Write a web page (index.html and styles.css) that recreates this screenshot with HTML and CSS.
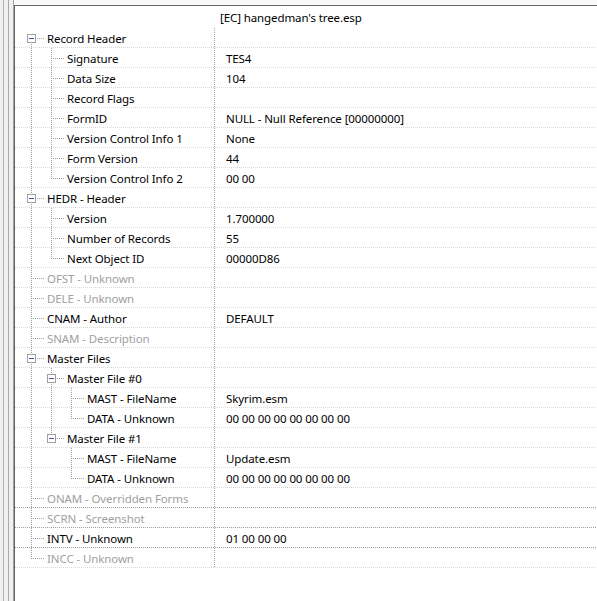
FILE: index.html
```html
<!DOCTYPE html>
<html>
<head>
<meta charset="utf-8">
<link rel="stylesheet" href="styles.css">
</head>
<body>
<div class="app">
  <div class="splitter"><span class="rail"></span><span class="rail"></span></div>
  <div class="view">
    <div class="topbar"></div>
    <div class="tree">
      <div class="head"><div class="head-name"></div><div class="head-value">[EC] hangedman's tree.esp</div></div>

      <div class="row"><div class="name"><span class="g first"><i class="box"></i></span><span class="label">Record Header</span></div><div class="value"></div></div>
      <div class="row"><div class="name"><span class="g pipe"></span><span class="g tee"></span><span class="label">Signature</span></div><div class="value">TES4</div></div>
      <div class="row"><div class="name"><span class="g pipe"></span><span class="g tee"></span><span class="label">Data Size</span></div><div class="value">104</div></div>
      <div class="row"><div class="name"><span class="g pipe"></span><span class="g tee"></span><span class="label">Record Flags</span></div><div class="value"></div></div>
      <div class="row"><div class="name"><span class="g pipe"></span><span class="g tee"></span><span class="label">FormID</span></div><div class="value">NULL - Null Reference [00000000]</div></div>
      <div class="row"><div class="name"><span class="g pipe"></span><span class="g tee"></span><span class="label">Version Control Info 1</span></div><div class="value">None</div></div>
      <div class="row"><div class="name"><span class="g pipe"></span><span class="g tee"></span><span class="label">Form Version</span></div><div class="value">44</div></div>
      <div class="row"><div class="name"><span class="g pipe"></span><span class="g elbow"></span><span class="label">Version Control Info 2</span></div><div class="value">00 00</div></div>

      <div class="row"><div class="name"><span class="g tee"><i class="box"></i></span><span class="label">HEDR - Header</span></div><div class="value"></div></div>
      <div class="row"><div class="name"><span class="g pipe"></span><span class="g tee"></span><span class="label">Version</span></div><div class="value">1.700000</div></div>
      <div class="row"><div class="name"><span class="g pipe"></span><span class="g tee"></span><span class="label">Number of Records</span></div><div class="value">55</div></div>
      <div class="row"><div class="name"><span class="g pipe"></span><span class="g elbow"></span><span class="label">Next Object ID</span></div><div class="value">00000D86</div></div>

      <div class="row"><div class="name"><span class="g tee"></span><span class="label muted">OFST - Unknown</span></div><div class="value"></div></div>
      <div class="row"><div class="name"><span class="g tee"></span><span class="label muted">DELE - Unknown</span></div><div class="value"></div></div>
      <div class="row"><div class="name"><span class="g tee"></span><span class="label">CNAM - Author</span></div><div class="value">DEFAULT</div></div>
      <div class="row"><div class="name"><span class="g tee"></span><span class="label muted">SNAM - Description</span></div><div class="value"></div></div>

      <div class="row"><div class="name"><span class="g tee"><i class="box"></i></span><span class="label">Master Files</span></div><div class="value"></div></div>
      <div class="row"><div class="name"><span class="g pipe"></span><span class="g tee"><i class="box"></i></span><span class="label">Master File #0</span></div><div class="value"></div></div>
      <div class="row"><div class="name"><span class="g pipe"></span><span class="g pipe"></span><span class="g tee"></span><span class="label">MAST - FileName</span></div><div class="value">Skyrim.esm</div></div>
      <div class="row"><div class="name"><span class="g pipe"></span><span class="g pipe"></span><span class="g elbow"></span><span class="label">DATA - Unknown</span></div><div class="value">00 00 00 00 00 00 00 00</div></div>
      <div class="row"><div class="name"><span class="g pipe"></span><span class="g elbow"><i class="box"></i></span><span class="label">Master File #1</span></div><div class="value"></div></div>
      <div class="row"><div class="name"><span class="g pipe"></span><span class="g"></span><span class="g tee"></span><span class="label">MAST - FileName</span></div><div class="value">Update.esm</div></div>
      <div class="row"><div class="name"><span class="g pipe"></span><span class="g"></span><span class="g elbow"></span><span class="label">DATA - Unknown</span></div><div class="value">00 00 00 00 00 00 00 00</div></div>

      <div class="row strong"><div class="name"><span class="g tee"></span><span class="label muted">ONAM - Overridden Forms</span></div><div class="value"></div></div>
      <div class="row strong"><div class="name"><span class="g tee"></span><span class="label muted">SCRN - Screenshot</span></div><div class="value"></div></div>
      <div class="row strong"><div class="name"><span class="g tee"></span><span class="label">INTV - Unknown</span></div><div class="value">01 00 00 00</div></div>
      <div class="row"><div class="name"><span class="g elbow"></span><span class="label muted">INCC - Unknown</span></div><div class="value"></div></div>
    </div>
  </div>
</div>
</body>
</html>
```
FILE: styles.css
```css
html, body {
  margin: 0;
  padding: 0;
  background: #ffffff;
}

body {
  font-family: "Noto Sans", "Open Sans", sans-serif;
  font-size: 11.5px;
  letter-spacing: -0.1px;
  color: #000000;
}

.app {
  display: flex;
  width: 597px;
  height: 601px;
  overflow: hidden;
}

/* left splitter strip */
.splitter {
  width: 13px;
  flex: none;
  display: flex;
  background: #f0f0f0;
  padding-left: 3px;
  box-sizing: border-box;
  gap: 4px;
}
.splitter .rail {
  width: 1px;
  background: #b4b4b4;
}
.splitter .rail + .rail {
  background: #a8a8a8;
}

.view {
  flex: 1;
  display: flex;
  flex-direction: column;
  border-left: 1px solid #a0a0a0;
}

.topbar {
  height: 5px;
  flex: none;
  background: #f9f9f9;
  border-bottom: 1px solid #646464;
}

.tree {
  flex: 1;
  border-left: 1px solid #646464;
  background: #ffffff;
}

.head {
  display: flex;
  height: 22px;
  line-height: 22px;
  padding-top: 1px;
  box-sizing: border-box;
}
.head-name {
  width: 199px;
  flex: none;
}
.head-value {
  padding-left: 6px;
  white-space: nowrap;
}

.row {
  display: flex;
  height: 20px;
  line-height: 20px;
  background: linear-gradient(to right, #d8d8d8 50%, transparent 50%) left bottom / 2px 1px repeat-x;
}
.row.strong {
  background-image: linear-gradient(to right, #a0a0a0 50%, transparent 50%);
}

.name {
  width: 199px;
  flex: none;
  display: flex;
  padding-left: 6px;
  box-sizing: border-box;
  white-space: nowrap;
}

.value {
  flex: 1;
  padding-left: 12px;
  padding-top: 1px;
  height: 20px;
  box-sizing: border-box;
  line-height: 19px;
  white-space: nowrap;
  background: linear-gradient(to bottom, #a0a0a0 50%, transparent 50%) left top / 1px 2px repeat-y;
}

.label {
  padding-left: 6px;
  padding-top: 1px;
  line-height: 19px;
}
.label.muted {
  color: #a0a0a0;
}

/* tree guide cells */
.g {
  width: 20px;
  height: 20px;
  flex: none;
  position: relative;
}
.g::before,
.g::after {
  content: "";
  position: absolute;
}
.pipe::before,
.tee::before,
.elbow::before,
.first::before {
  left: 10px;
  width: 1px;
  background: linear-gradient(to bottom, #a0a0a0 50%, transparent 50%) left top / 1px 2px repeat-y;
}
.pipe::before,
.tee::before {
  top: 0;
  height: 20px;
}
.elbow::before {
  top: 0;
  height: 11px;
}
.first::before {
  top: 10px;
  height: 10px;
}
.tee::after,
.elbow::after,
.first::after {
  left: 10px;
  top: 10px;
  width: 13px;
  height: 1px;
  background: linear-gradient(to right, #a0a0a0 50%, transparent 50%) left top / 2px 1px repeat-x;
}

/* expand / collapse box */
.box {
  position: absolute;
  left: 6px;
  top: 6px;
  width: 9px;
  height: 9px;
  box-sizing: border-box;
  border: 1px solid #a0a0a0;
  background: #ffffff;
  z-index: 1;
}
.box::after {
  content: "";
  position: absolute;
  left: 1px;
  top: 3px;
  width: 5px;
  height: 1px;
  background: #3c5a9a;
}
```
